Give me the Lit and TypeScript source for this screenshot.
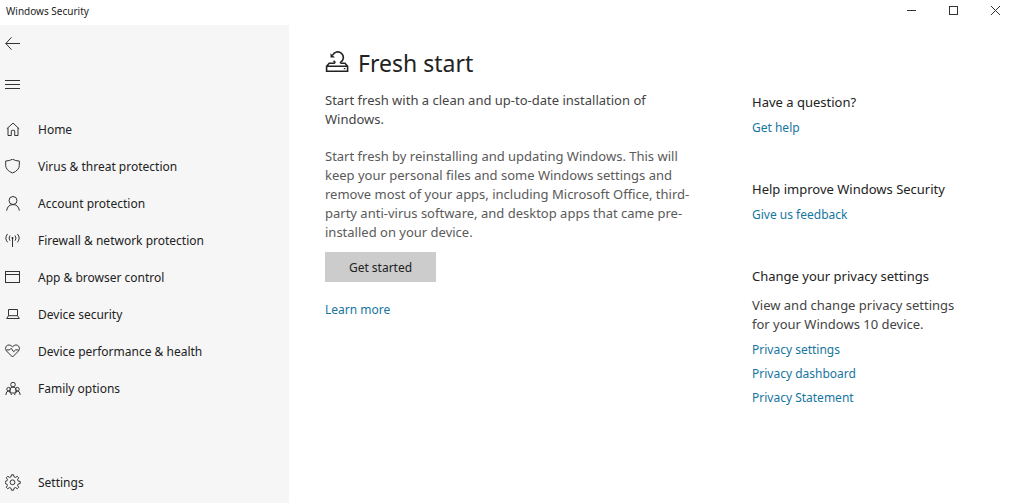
import { LitElement, html, css, svg, type TemplateResult } from "lit";
import { customElement } from "lit/decorators.js";

const icon = (body: TemplateResult, width = 16, height = 16) => html`
  <svg class="icon" width=${width} height=${height} viewBox="0 0 ${width} ${height}" aria-hidden="true">${body}</svg>
`;

const icons = {
  back: icon(svg`<path d="M15 7.500H.8M6.500 1.300.8 7.500l5.700 6.200"/>`),
  menu: icon(svg`<path class="crisp" d="M0 3.500h15M0 7.500h15M0 11.500h15"/>`),
  home: icon(svg`<path d="M1.800 6.800 8 1.100l6.200 5.700M3 5.900v7.600h3.300V9.100q0-.8.800-.8h1.800q.8 0 .8.800V13.500H13V5.900"/>`),
  shield: icon(svg`<path d="M7.500.2Q10.500 2 14.300 2V6.300q0 5-6.800 7.700Q.7 11.300 .7 6.300V2Q4.500 2 7.500.2Z"/>`),
  person: icon(svg`<circle cx="8" cy="4.500" r="4"/><path d="M1.600 14.700Q2.600 8.600 8 8.600t6.400 6.100"/>`),
  signal: icon(svg`<path d="M7.500 5v9M5 2.500q-2 2.600 0 5.200M10 2.500q2 2.600 0 5.200M2.600.9q-3.500 4.200 0 8.400M12.400.9q3.500 4.200 0 8.400"/><circle class="solid" cx="7.500" cy="5" r="1"/>`),
  browser: icon(svg`<path class="crisp" d="M.5 1.500h14v11H.5ZM.5 4.500h14"/>`),
  laptop: icon(svg`<path d="M3.500 2.500h9v6.200h-9ZM3.500 8.700 1.700 11.500h12.600L12.500 8.700"/>`),
  heart: icon(svg`<path d="M7.500 13 1.400 6.900Q-.3 4.500 1.200 2.300 4-.6 7.500 2.800 11-.6 13.800 2.300q1.500 2.200-.2 4.600ZM1.600 5.900h3l1.600-1.600 2.400 3.500 2-1.900h2.800"/>`),
  family: icon(svg`<circle cx="8" cy="3.600" r="2.300"/><circle cx="3.600" cy="8.200" r="1.800"/><circle cx="12.400" cy="8.200" r="1.800"/><path d="M5 12V8.500Q5.300 6 8 6t3 2.500V12M.8 14q.2-4 2.800-4t2.800 4M9.600 14q.2-4 2.800-4t2.800 4M6.300 12h3.400"/>`),
  gear: icon(svg`<path d="M6.500.8h2l.5 2 1.500.6 1.800-1.100 1.400 1.400-1.100 1.800.6 1.500 2 .5v2l-2 .5-.6 1.500 1.100 1.800-1.400 1.400-1.800-1.100-1.500.6-.5 2h-2l-.5-2-1.500-.6-1.800 1.100-1.400-1.400 1.100-1.800-.6-1.500-1.700-.5v-2l1.700-.5.6-1.500-1.100-1.800 1.400-1.400 1.800 1.100L6 2.800Z"/><circle cx="7.500" cy="8.300" r="2.400"/>`, 16, 17),
  fresh: icon(svg`<g class="bold"><path d="M9.800 12.300H4.200L1.600 15.200V20.300h21V15.200l-2.600-2.900H15.500M1.600 15.200h21"/><path d="M7.600 4.300A5.600 5.600 0 1 1 15.500 11.400v.9M9.800 12.300v-1.200L8.600 9.800"/></g><path class="solid" d="M5.500 2.200v4.400h4.400Z"/><path class="solid" d="M18.800 17h1.600v1.200h-1.600z"/>`, 24, 24),
  minimize: icon(svg`<path class="crisp" d="M4 7.500h9"/>`),
  maximize: icon(svg`<path class="crisp" d="M4.500 3.500h8v8h-8Z"/>`),
  close: icon(svg`<path d="m4 3 9 9M13 3l-9 9"/>`),
};

const sections = [
  { label: "Home", glyph: icons.home },
  { label: "Virus & threat protection", glyph: icons.shield },
  { label: "Account protection", glyph: icons.person },
  { label: "Firewall & network protection", glyph: icons.signal },
  { label: "App & browser control", glyph: icons.browser },
  { label: "Device security", glyph: icons.laptop },
  { label: "Device performance & health", glyph: icons.heart },
  { label: "Family options", glyph: icons.family },
];

@customElement("app-root")
export class AppRoot extends LitElement {
  static styles = css`
    :host {
      display: flex;
      flex-direction: column;
      min-height: 100vh;
      background: #fff;
      color: #222;
      font: 12px/19px "Noto Sans", "Open Sans", sans-serif;
    }
    * { box-sizing: border-box; }
    h1, h2, p, ul { margin: 0; padding: 0; font-weight: 400; }
    ul { list-style: none; }
    button { border: 0; background: none; padding: 0; color: inherit; font: inherit; }
    a { color: #16759f; text-decoration: none; }
    a:hover { text-decoration: underline; }
    .icon { display: block; flex: none; fill: none; stroke: #333; stroke-width: 1; }
    .crisp { shape-rendering: crispEdges; }
    .solid { fill: #222; stroke: none; }
    .bold { stroke: #222; stroke-width: 1.6; }
    .titlebar { display: flex; justify-content: space-between; align-items: center; height: 25px; padding-left: 6px; }
    .caption { font-size: 10px; line-height: 20px; padding-bottom: 4px; }
    .controls { display: flex; padding-bottom: 4px; }
    .control { display: grid; place-items: center; width: 42px; height: 20px; }
    .body { flex: 1; display: flex; }
    .sidebar { display: flex; flex-direction: column; flex: none; width: 289px; padding-bottom: 2px; background: #f6f6f6; }
    .tool { display: flex; align-items: center; width: 46px; height: 37px; padding-left: 5px; }
    .tool + .tool { margin-top: 4px; }
    .sections { flex: 1; margin-top: 8px; }
    .entry { display: flex; align-items: center; gap: 17px; height: 37px; padding-left: 5px; color: #222; }
    .entry:hover { background: #e9e9e9; text-decoration: none; }
    .content { flex: 1; display: grid; grid-template-columns: minmax(0, 375px) minmax(0, 210px); column-gap: 52px; align-items: start; padding: 22px 36px; }
    .title { display: flex; align-items: center; gap: 9px; font-size: 23px; line-height: 32px; }
    .lead, .detail, .note { font-size: 13px; }
    .lead { margin-top: 12px; color: #444; }
    .detail { margin-top: 18px; color: #5a5a5a; }
    .start { display: block; min-width: 111px; height: 30px; margin: 10px 0 18px; background: #ccc; color: #222; }
    .aside { display: grid; gap: 43px; padding-top: 46px; }
    .aside h2 { font-size: 13px; }
    .links { display: grid; gap: 5px; margin-top: 6px; }
    .note { margin-top: 10px; color: #444; }
  `;

  render() {
    return html`
      <header class="titlebar">
        <span class="caption">Windows Security</span>
        <div class="controls">
          <button class="control" aria-label="Minimize">${icons.minimize}</button>
          <button class="control" aria-label="Maximize">${icons.maximize}</button>
          <button class="control" aria-label="Close">${icons.close}</button>
        </div>
      </header>
      <div class="body">
        <nav class="sidebar">
          <button class="tool" aria-label="Back">${icons.back}</button>
          <button class="tool" aria-label="Menu">${icons.menu}</button>
          <ul class="sections">
            ${sections.map((s) => html`<li><a class="entry" href="#">${s.glyph}<span>${s.label}</span></a></li>`)}
          </ul>
          <a class="entry" href="#">${icons.gear}<span>Settings</span></a>
        </nav>
        <main class="content">
          <article>
            <h1 class="title">${icons.fresh}<span>Fresh start</span></h1>
            <p class="lead">Start fresh with a clean and up-to-date installation of Windows.</p>
            <p class="detail">
              Start fresh by reinstalling and updating Windows. This will keep your personal files and some Windows
              settings and remove most of your apps, including Microsoft Office, third-party anti-virus software, and
              desktop apps that came pre-installed on your device.
            </p>
            <button class="start">Get started</button>
            <a href="#">Learn more</a>
          </article>
          <aside class="aside">
            <section>
              <h2>Have a question?</h2>
              <div class="links"><a href="#">Get help</a></div>
            </section>
            <section>
              <h2>Help improve Windows Security</h2>
              <div class="links"><a href="#">Give us feedback</a></div>
            </section>
            <section>
              <h2>Change your privacy settings</h2>
              <p class="note">View and change privacy settings for your Windows 10 device.</p>
              <div class="links">
                <a href="#">Privacy settings</a>
                <a href="#">Privacy dashboard</a>
                <a href="#">Privacy Statement</a>
              </div>
            </section>
          </aside>
        </main>
      </div>
    `;
  }
}
